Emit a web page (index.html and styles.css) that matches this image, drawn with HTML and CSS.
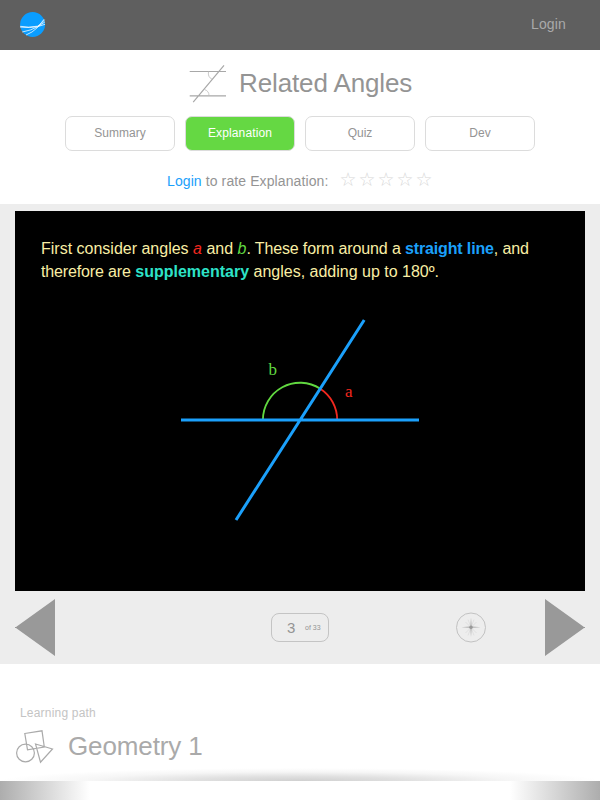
FILE: index.html
```html
<!DOCTYPE html>
<html lang="en">
<head>
<meta charset="utf-8">
<title>Related Angles</title>
<link rel="stylesheet" href="styles.css">
</head>
<body>
<header class="topbar">
  <svg class="logo" width="26" height="26" viewBox="0 0 26 26">
    <circle cx="12.600" cy="12.500" r="12.500" fill="#0a9dff"/>
    <g fill="none" stroke="#fff" stroke-width=".75">
      <path d="M.2 14.300Q8 16 17.500 14.200Q21.500 12 24.500 7.800M2.200 20Q11 18.500 17.500 14.800Q22 12 25 9.800M6 23Q12.500 20.500 17.500 15.500Q22 10 24 7.300M.2 15.100Q10 16.200 17.500 14.700L25 12.300"/>
    </g>
  </svg>
  <a class="login">Login</a>
</header>
<main>
  <section class="intro">
    <div class="title">
      <svg width="38" height="38" viewBox="0 0 38 38" fill="none" stroke="#a8a8a8">
        <path d="M.7 6.500H37M.7 30.800H37M4.200 37.200L35 .4" stroke-width="1.2"/>
        <path d="M19.500 6.600Q18.500 12 23 14.200M20 30.500Q20 26 15.500 24.500" stroke="#bcbcbc" stroke-width=".8"/>
      </svg>
      <h1>Related Angles</h1>
    </div>
    <nav class="tabs">
      <a class="tab">Summary</a><a class="tab active">Explanation</a><a class="tab">Quiz</a><a class="tab">Dev</a>
    </nav>
    <div class="rating">
      <p><a>Login</a> to rate Explanation:</p>
      <div class="stars"><span>☆</span><span>☆</span><span>☆</span><span>☆</span><span>☆</span></div>
    </div>
  </section>
  <section class="lesson">
    <div class="slide">
      <p>First consider angles <i class="red">a</i> and <i class="green">b</i><span class="snug">. These form around a <b class="blue">straight line</b>, and</span> <span class="snug">therefore are</span> <b class="teal">supplementary</b> angles, adding up to 180º.</p>
      <svg class="diagram" width="570" height="290" viewBox="15 301 570 290" fill="none">
        <path d="M337.200 420A37.200 37.200 0 0 0 320.300 388.700" stroke="#f2281f" stroke-width="1.8"/>
        <path d="M320.300 388.700A37.200 37.200 0 0 0 262.900 420" stroke="#61d840" stroke-width="1.8"/>
        <path d="M181 420H419M236 520L364.200 320" stroke="#1ba0fb" stroke-width="3"/>
        <text x="268.500" y="375" fill="#61d840">b</text>
        <text x="345" y="397" fill="#f2281f">a</text>
      </svg>
    </div>
    <div class="controls">
      <svg width="40" height="58" viewBox="0 0 40 58"><path d="M40 0V57L1 29H0V28H1Z" fill="#999"/></svg>
      <div class="page"><span class="current">3</span><span class="total">of 33</span></div>
      <svg class="compass" width="30" height="30" viewBox="0 0 30 30">
        <circle cx="15" cy="14.500" r="14.500" fill="none" stroke="#c2c2c2"/>
        <path d="M9.500 9L20.500 20M20.500 9L9.500 20M12 6.500L18 22.500M18 6.500L12 22.500" stroke="#dcdcdc" stroke-width=".8"/>
        <path d="M15 4.500L15.900 13.300L24.500 14.300L15.900 15.300L15 24L14.100 15.300L5.500 14.300L14.100 13.300Z" fill="#c0c0c0"/>
        <circle cx="15" cy="14.300" r="1.700" fill="#999"/>
      </svg>
      <svg width="40" height="58" viewBox="0 0 40 58"><path d="M0 0V57L39 29H40V28H39Z" fill="#999"/></svg>
    </div>
  </section>
  <section class="path">
    <h3>Learning path</h3>
    <div class="course">
      <svg width="38" height="36" viewBox="0 0 38 36" fill="none" stroke="#aaa" stroke-width="1.200">
        <circle cx="9.500" cy="24" r="8.900"/>
        <path d="M8.800 4.500L26 1.800L28.300 18L11.500 20.800ZM19.500 15L36.500 20L24.500 33.200Z"/>
      </svg>
      <h2>Geometry 1</h2>
    </div>
  </section>
</main>
<div class="shade"></div>
<footer></footer>
</body>
</html>
```
FILE: styles.css
```css
* { box-sizing: border-box; }
body { margin: 0; height: 800px; overflow: hidden; background: #fff; font-family: "Liberation Sans", Arial, sans-serif; color: #949494; }
h1, h2, h3, p { margin: 0; font-weight: normal; }
svg { display: block; flex: none; }
.topbar { height: 50px; background: #5f5f5f; display: flex; justify-content: space-between; padding: 12px 34px 0 20px; }
.login { font-size: 14px; line-height: 24px; letter-spacing: .15px; color: #aaa; }
.intro { height: 154px; padding-top: 15px; }
.title { display: flex; padding-left: 189px; height: 38px; gap: 12px; }
h1 { font-size: 26px; line-height: 36px; letter-spacing: -.12px; }
.tabs { display: flex; justify-content: center; gap: 10px; margin-top: 13px; }
.tab { width: 110px; height: 35px; border: 1px solid #dcdcdc; border-radius: 7px; font-size: 12px; line-height: 33px; text-align: center; }
.active { background: #65d843; color: #fff; letter-spacing: .12px; }
.rating { display: flex; margin: 17px 0 0 167px; height: 28px; }
.rating p { font-size: 14px; line-height: 27px; width: 172.5px; letter-spacing: .1px; white-space: nowrap; }
.rating a { color: #1ba0fb; }
.stars { display: flex; font: 19px/22px "DejaVu Sans", sans-serif; color: #d8d8d8; }
.stars span { width: 19px; }
.lesson { height: 460px; background: #ededed; padding: 7px 15px 0; }
.slide { height: 380px; background: #000; padding-top: 26px; }
.slide p { height: 64px; margin: 0 26px; font-size: 16px; line-height: 23px; color: #f9eea5; }
.slide .snug { letter-spacing: -.14px; }
.slide .red { color: #f2281f; }
.slide .green { color: #61d840; }
.slide .blue { color: #1ba0fb; }
.slide .teal { color: #2de3c8; }
.diagram text { font: 17px "Liberation Serif", serif; }
.controls { display: flex; padding-top: 8px; }
.page { width: 58px; height: 29px; border: 1px solid #c4c4c4; border-radius: 8px; margin: 14px 0 0 216px; padding-left: 15px; display: flex; line-height: 27px; }
.current { width: 18px; font-size: 15px; }
.total { font-size: 7px; line-height: 28px; }
.compass { margin: 14px 59px 0 127px; overflow: visible; }
.path { height: 104px; padding: 42px 16px 0; color: #aaa; }
h3 { font-size: 12px; line-height: 14px; margin-left: 4px; color: #c4c4c4; letter-spacing: .2px; }
.course { display: flex; gap: 14px; margin-top: 9px; }
h2 { font-size: 26px; line-height: 35px; letter-spacing: -.12px; }
.shade { height: 13px; background: radial-gradient(ellipse 50% 100% at 50% 100%, #d0d0d0, #e0e0e0 35%, #f6f6f6 70%, #fff); }
footer { height: 19px; background: linear-gradient(90deg, #adadad, #fff 15%, #fff 85%, #adadad); }
```
